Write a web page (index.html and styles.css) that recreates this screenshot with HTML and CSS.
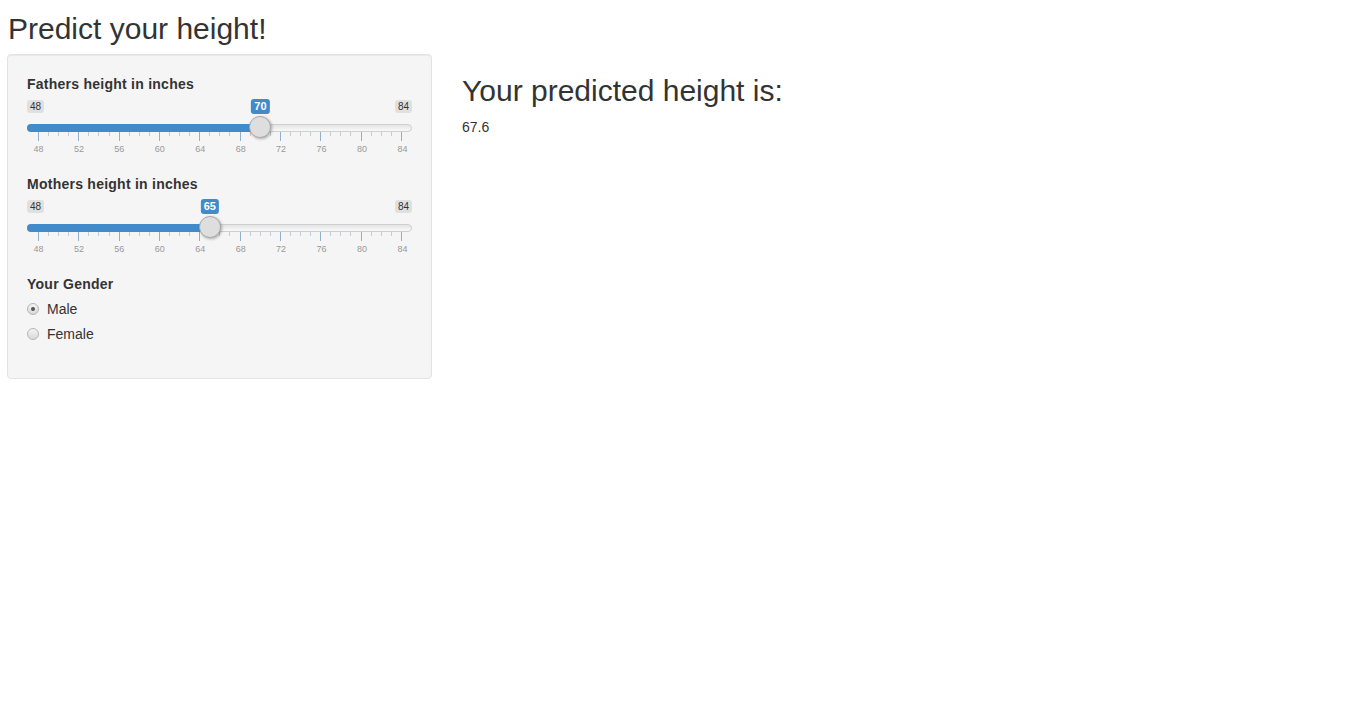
FILE: index.html
```html
<!DOCTYPE html>
<html>
<head>
<meta charset="utf-8">
<title>Predict your height!</title>
<link rel="stylesheet" href="styles.css">
</head>
<body>
<div class="page">
  <h2 class="title">Predict your height!</h2>
  <div class="row">
    <div class="well">
      <div class="group">
        <label class="ctl-label">Fathers height in inches</label>
        <div class="irs">
          <span class="irs-min">48</span>
          <span class="irs-max">84</span>
          <div class="irs-line"></div>
          <div class="irs-rail">
            <div class="irs-bar" style="width: calc(61.111% + 11px)"></div>
            <div class="irs-grid">
              <i class="big"></i><i></i><i></i><i></i><i class="big"></i><i></i><i></i><i></i><i class="big"></i><i></i><i></i><i></i><i class="big"></i><i></i><i></i><i></i><i class="big"></i><i></i><i></i><i></i><i class="big"></i><i></i><i></i><i></i><i class="big"></i><i></i><i></i><i></i><i class="big"></i><i></i><i></i><i></i><i class="big"></i><i></i><i></i><i></i><i class="big"></i>
            </div>
            <div class="irs-grid-text">
              <span>48</span><span>52</span><span>56</span><span>60</span><span>64</span><span>68</span><span>72</span><span>76</span><span>80</span><span>84</span>
            </div>
            <span class="irs-single" style="left: 61.111%">70</span>
            <span class="irs-handle" style="left: 61.111%"></span>
          </div>
        </div>
      </div>
      <div class="group">
        <label class="ctl-label">Mothers height in inches</label>
        <div class="irs">
          <span class="irs-min">48</span>
          <span class="irs-max">84</span>
          <div class="irs-line"></div>
          <div class="irs-rail">
            <div class="irs-bar" style="width: calc(47.222% + 11px)"></div>
            <div class="irs-grid">
              <i class="big"></i><i></i><i></i><i></i><i class="big"></i><i></i><i></i><i></i><i class="big"></i><i></i><i></i><i></i><i class="big"></i><i></i><i></i><i></i><i class="big"></i><i></i><i></i><i></i><i class="big"></i><i></i><i></i><i></i><i class="big"></i><i></i><i></i><i></i><i class="big"></i><i></i><i></i><i></i><i class="big"></i><i></i><i></i><i></i><i class="big"></i>
            </div>
            <div class="irs-grid-text">
              <span>48</span><span>52</span><span>56</span><span>60</span><span>64</span><span>68</span><span>72</span><span>76</span><span>80</span><span>84</span>
            </div>
            <span class="irs-single" style="left: 47.222%">65</span>
            <span class="irs-handle" style="left: 47.222%"></span>
          </div>
        </div>
      </div>
      <div class="group radios">
        <label class="ctl-label">Your Gender</label>
        <div class="radio-list">
          <label class="radio"><span class="radio-dot checked"></span>Male</label>
          <label class="radio"><span class="radio-dot"></span>Female</label>
        </div>
      </div>
    </div>
    <div class="main">
      <h3 class="result-title">Your predicted height is:</h3>
      <div class="result">67.6</div>
    </div>
  </div>
</div>
</body>
</html>
```

FILE: styles.css
```css
html, body {
  margin: 0;
  padding: 0;
  background: #fff;
}
body {
  font-family: "Liberation Sans", Arial, sans-serif;
  color: #333;
  font-size: 14px;
}
.page {
  padding: 0 7px;
}
.title {
  margin: 0;
  padding: 11px 0 0 1px;
  height: 54px;
  box-sizing: border-box;
  font-size: 30px;
  line-height: 36px;
  font-weight: normal;
  color: #333;
}
.row {
  display: flex;
  align-items: flex-start;
  gap: 30px;
}
.well {
  width: 425px;
  box-sizing: border-box;
  background: #f5f5f5;
  border: 1px solid #e3e3e3;
  border-radius: 4px;
  padding: 19px 19px 12px 19px;
  box-shadow: inset 0 1px 1px rgba(0,0,0,0.05);
}
.group {
  margin-bottom: 20px;
}
.ctl-label {
  display: block;
  font-weight: bold;
  font-size: 14px;
  letter-spacing: 0.25px;
  line-height: 20px;
  color: #333;
}
.irs {
  position: relative;
  height: 60px;
}
.irs-min, .irs-max {
  position: absolute;
  top: 6px;
  font-size: 10px;
  line-height: 13px;
  padding: 0 3px;
  background: #e0e0e0;
  color: #333;
  border-radius: 3px;
}
.irs-min { left: 0; }
.irs-max { right: 0; }
.irs-line {
  position: absolute;
  left: 0;
  right: 0;
  top: 30px;
  height: 8px;
  box-sizing: border-box;
  background: linear-gradient(#e4e4e4, #f9f9f9);
  border: 1px solid #cfcfcf;
  border-radius: 4px;
}
.irs-rail {
  position: absolute;
  left: 11px;
  right: 10px;
  top: 0;
  bottom: 0;
}
.irs-bar {
  position: absolute;
  left: -11px;
  top: 30px;
  height: 8px;
  background: #428bca;
  border-radius: 4px 0 0 4px;
}
.irs-grid {
  position: absolute;
  left: 0;
  right: 0;
  top: 38px;
  display: flex;
  justify-content: space-between;
  align-items: flex-start;
}
.irs-grid i {
  width: 1px;
  height: 4px;
  background: #c2ccd6;
}
.irs-grid i.big {
  height: 9px;
  background: #8fb0cf;
}
.irs-grid-text {
  position: absolute;
  left: -10px;
  right: -11px;
  top: 49px;
  display: flex;
  justify-content: space-between;
}
.irs-grid-text span {
  width: 21px;
  text-align: center;
  font-size: 9px;
  line-height: 12px;
  color: #999;
}
.irs-single {
  position: absolute;
  top: 5px;
  transform: translateX(-50%);
  background: #428bca;
  color: #fff;
  font-size: 11px;
  font-weight: bold;
  line-height: 15px;
  padding: 0 3px;
  border-radius: 3px;
}
.irs-handle {
  position: absolute;
  top: 22px;
  width: 22px;
  height: 22px;
  box-sizing: border-box;
  transform: translateX(-50%);
  border-radius: 50%;
  background: #dedede;
  border: 1px solid #a9a9a9;
  box-shadow: 1px 1px 3px rgba(0,0,0,0.3);
}
.radio-list {
  padding-top: 2px;
}
.radio {
  display: flex;
  align-items: center;
  height: 25px;
  font-size: 14px;
  color: #333;
}
.radio-dot {
  width: 12px;
  height: 12px;
  box-sizing: border-box;
  border-radius: 50%;
  border: 1px solid #b5b5b5;
  background: linear-gradient(#f4f4f4, #d9d9d9);
  margin-right: 8px;
  position: relative;
}
.radio-dot.checked::after {
  content: "";
  position: absolute;
  left: 3px;
  top: 3px;
  width: 4px;
  height: 4px;
  border-radius: 50%;
  background: #555;
}
.main {
  padding-top: 17px;
}
.result-title {
  margin: 0;
  font-size: 30px;
  line-height: 40px;
  font-weight: normal;
  color: #333;
}
.result {
  margin-top: 6px;
  font-size: 14px;
  line-height: 20px;
}
```
